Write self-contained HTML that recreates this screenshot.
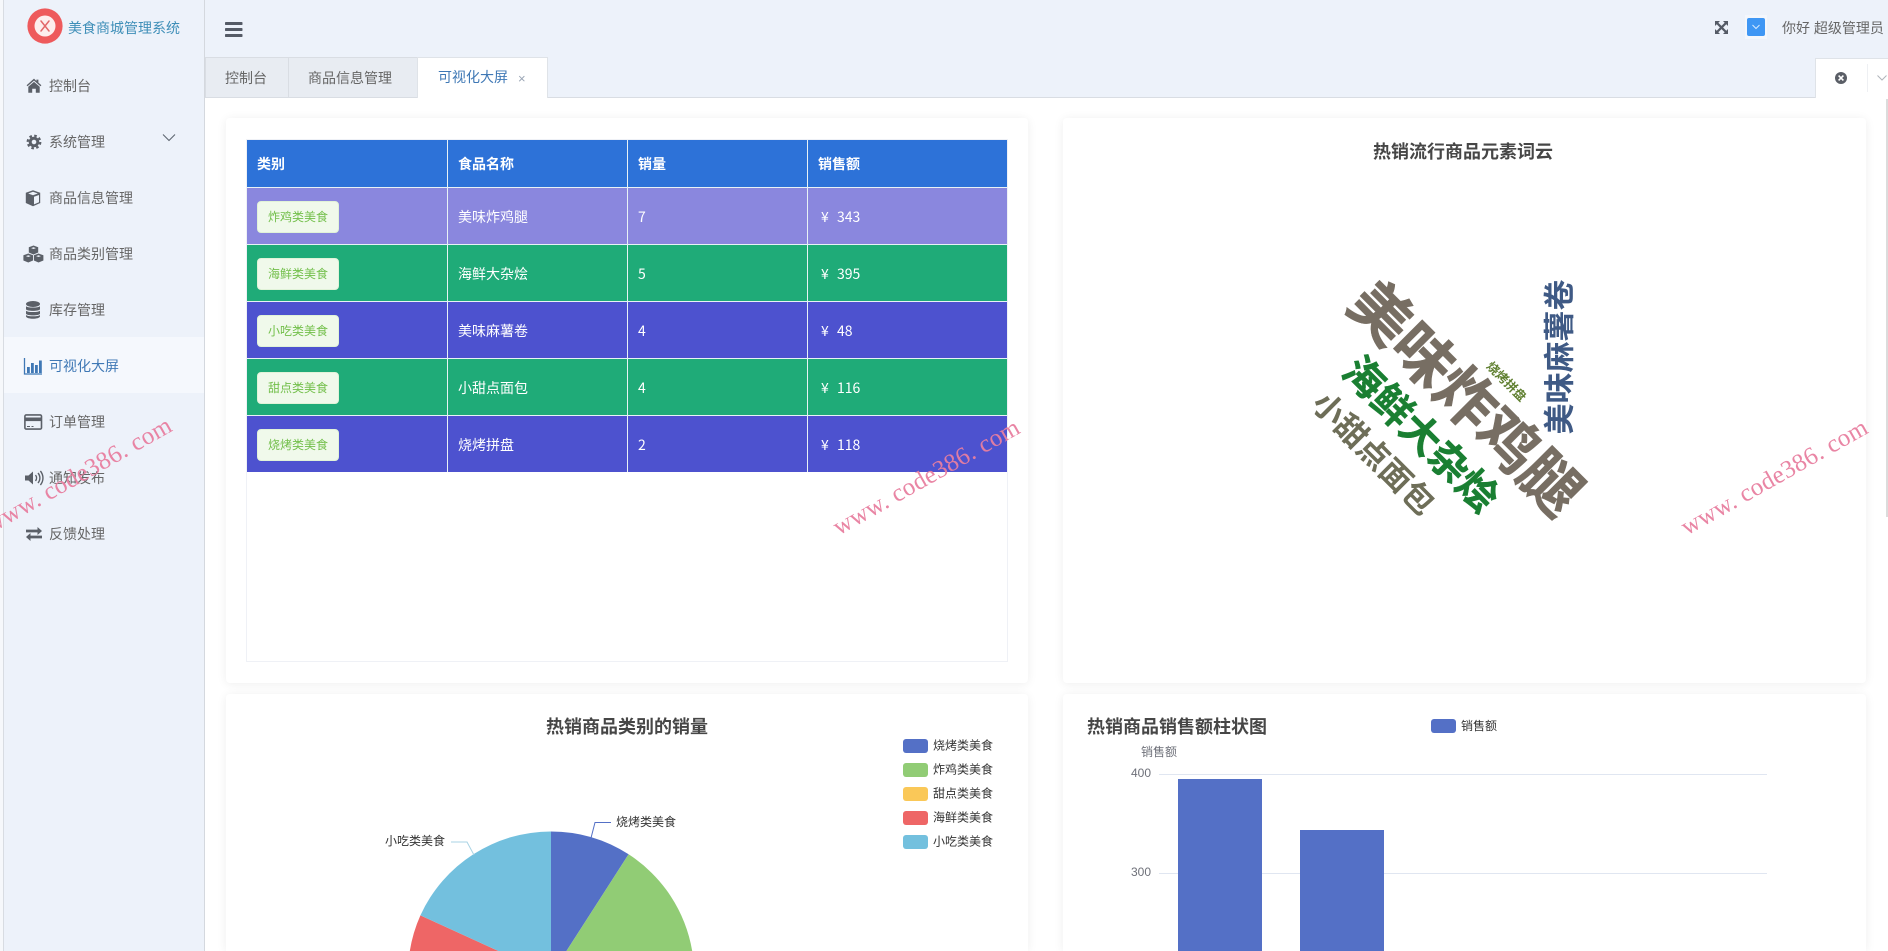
<!DOCTYPE html>
<html lang="zh-CN">
<head>
<meta charset="utf-8">
<title>美食商城管理系统</title>
<style>
*{box-sizing:border-box;margin:0;padding:0}
html,body{width:1888px;height:951px;overflow:hidden;background:#fff}
body{position:relative;font-family:"Liberation Sans","Noto Sans CJK SC",sans-serif;font-size:14px;color:#666}
.a{position:absolute;white-space:nowrap}
#top{left:0;top:0;width:1888px;height:97px;background:#edf2fa}
#side{left:3px;top:0;width:202px;height:951px;background:#edf2fa;border-left:1px solid #d8dce2;border-right:1px solid #d4d8de}
#edge{left:0;top:0;width:3px;height:951px;background:#f6f8fb}
.logo{left:68px;top:18px;line-height:20px;color:#3f8fb8}
.mi{left:49px;line-height:20px;color:#666}
.ic{position:absolute;left:22px;width:24px;height:24px}
.tab{top:57px;height:40px;line-height:41px;text-align:center;color:#666;background:#e8ecf2;border:1px solid #d9dde3;border-bottom:0}
.card{background:#fff;border-radius:4px;box-shadow:0 1px 10px rgba(0,0,0,.07)}
table{border-collapse:separate;border-spacing:0;table-layout:fixed;width:760px;color:#fff;font-family:"Noto Sans CJK SC",sans-serif}
th,td{text-align:left;padding:0 0 0 10px;border-right:1px solid #e8f2f6;border-bottom:1px solid #e8f2f6}
th:last-child,td:last-child{border-right:0}
tr:last-child td{border-bottom:0;height:56px}
th{height:48px;background:#2d72d8;font-weight:700}
td{height:57px;padding-top:1px;line-height:20px}
td:last-child{padding-left:13px}
td i{display:inline-block;width:16px;font-style:normal}
.r1 td{background:#8a87de}
.r2 td{background:#1fab78}
.r3 td{background:#4d52cf}
.tag{display:block;width:82px;height:32px;line-height:30px;text-align:center;font-size:12px;color:#72bf4a;background:#f0f9eb;border:1px solid #e1f3d8;border-radius:4px}
.wc{position:absolute;white-space:nowrap;font-weight:700;line-height:1;font-family:"Liberation Sans","Noto Sans CJK SC",sans-serif;transform:translate(-50%,-50%) rotate(45deg)}
.wm{position:absolute;white-space:nowrap;font-family:"Liberation Serif",serif;font-size:25px;line-height:28px;letter-spacing:.3px;color:#e87fa0;transform-origin:100% 50%;transform:rotate(-29.5deg);opacity:.95}
svg text{font-family:"Liberation Sans","Noto Sans CJK SC",sans-serif}
</style>
</head>
<body>
<div class="a" id="top"></div>
<div class="a" id="edge"></div>
<div class="a" id="side"></div>

<!-- logo -->
<svg class="a" style="left:27px;top:8px" width="36" height="36" viewBox="0 0 36 36">
<circle cx="18" cy="18" r="17.6" fill="#ee5a5c"/>
<circle cx="18" cy="18" r="10.5" fill="#fdeeee"/>
<path d="M14 13L22 23M22 13L14 23" stroke="#e2686a" stroke-width="1.5" stroke-linecap="round"/>
</svg>
<div class="a logo">美食商城管理系统</div>

<!-- hamburger -->
<svg class="a" style="left:225px;top:21px" width="18" height="16" viewBox="0 0 18 16">
<rect x="0" y="1" width="17.5" height="3" rx=".8" fill="#555b66"/>
<rect x="0" y="7" width="17.5" height="3" rx=".8" fill="#555b66"/>
<rect x="0" y="13" width="17.5" height="3" rx=".8" fill="#555b66"/>
</svg>

<!-- sidebar items -->
<div class="a" style="left:4px;top:337px;width:200px;height:56px;background:#f5f8fd"></div>
<div class="a mi" style="top:76px">控制台</div>
<div class="a mi" style="top:132px">系统管理</div>
<div class="a mi" style="top:188px">商品信息管理</div>
<div class="a mi" style="top:244px">商品类别管理</div>
<div class="a mi" style="top:300px">库存管理</div>
<div class="a mi" style="top:356px;color:#3f78b5">可视化大屏</div>
<div class="a mi" style="top:412px">订单管理</div>
<div class="a mi" style="top:468px">通知发布</div>
<div class="a mi" style="top:524px">反馈处理</div>

<svg class="a" style="left:161px;top:132px" width="16" height="12" viewBox="0 0 16 12"><path d="M2 2.5L8 8.5L14 2.5" fill="none" stroke="#5f6670" stroke-width="1.1"/></svg>

<!-- home -->
<svg class="ic" style="top:74px" viewBox="0 0 24 24" fill="#5b6068"><path d="M12 4.6L4.6 11.3l.9 1L12 6.6l6.5 5.7.9-1-3-2.7V5.6h-2v1.4z"/><path d="M6.3 12.7L12 7.9l5.7 4.8v6H13.8v-4h-3.6v4H6.3z"/></svg>
<!-- gear -->
<svg class="ic" style="top:130px" viewBox="0 0 24 24"><circle cx="12" cy="12" r="3.8" fill="none" stroke="#5b6068" stroke-width="3"/><circle cx="12" cy="12" r="6.3" fill="none" stroke="#5b6068" stroke-width="2.2" stroke-dasharray="2.6 2.35"/></svg>
<!-- cube -->
<svg class="ic" style="top:186px;left:21px" viewBox="0 0 24 24"><path d="M12 4.2L19.2 6.8V17L12 20.2 4.8 17V6.8z" fill="#5b6068"/><path d="M12 5.8L16.8 7.5 12 9.2 7.2 7.5z" fill="#edf2fa"/><path d="M13 10.8L18 9V16.2L13 18.4z" fill="#edf2fa"/></svg>
<!-- cubes -->
<svg class="ic" style="top:242px;left:21px" viewBox="0 0 24 24" fill="#5b6068"><path d="M12.5 3.5l4.7 1.8v5.2l-4.7 2-4.7-2V5.3z"/><path d="M7.3 11.5L12 13.3v5.2l-4.7 2-4.9-2v-5.2z"/><path d="M17.5 11.5l4.9 1.8v5.2l-4.9 2-4.6-2v-5.2z"/><path d="M12.5 5.2l2.4.9-2.4.9-2.4-.9z M7.3 13.2l2.4.9-2.4.9-2.4-.9z M17.5 13.2l2.4.9-2.4.9-2.4-.9z" fill="#edf2fa"/></svg>
<!-- database -->
<svg class="ic" style="top:298px;left:21px" viewBox="0 0 24 24" fill="#5b6068"><ellipse cx="12" cy="6" rx="7" ry="3"/><path d="M5 8.2c1.2 1.7 12.8 1.7 14 0v3c-1 2.2-13 2.2-14 0z"/><path d="M5 12.7c1.2 1.7 12.8 1.7 14 0v3c-1 2.2-13 2.2-14 0z"/><path d="M5 17c1.2 1.7 12.8 1.7 14 0v1.5c-1 3-13 3-14 0z"/></svg>
<!-- chart -->
<svg class="ic" style="top:354px;left:21px" viewBox="0 0 24 24"><path d="M3.5 4v16H21" fill="none" stroke="#3f78b5" stroke-width="1.3"/><g fill="#3f78b5"><rect x="6" y="13" width="2.8" height="6"/><rect x="10" y="9" width="2.8" height="10"/><rect x="14" y="11" width="2.8" height="8"/><rect x="18" y="6.5" width="2.8" height="12.5"/></g></svg>
<!-- card -->
<svg class="ic" style="top:410px;left:21px" viewBox="0 0 24 24"><rect x="3.9" y="4.9" width="16.6" height="14.2" rx="1.4" fill="none" stroke="#5b6068" stroke-width="1.6"/><rect x="4" y="7.5" width="16.4" height="3.6" fill="#5b6068"/><path d="M6 16.5h3M10.5 16.5h2" stroke="#5b6068" stroke-width="1"/></svg>
<!-- volume -->
<svg class="ic" style="top:466px;left:22px" viewBox="0 0 24 24"><path d="M3 9.5h3.5L11 5.5v13l-4.5-4H3z" fill="#5b6068"/><path d="M13.5 9c1.4 1.8 1.4 4.2 0 6M16 7c2.5 3 2.5 7 0 10M18.4 5c3.4 4.2 3.4 9.8 0 14" fill="none" stroke="#5b6068" stroke-width="1.4"/></svg>
<!-- exchange -->
<svg class="ic" style="top:522px;left:22px" viewBox="0 0 24 24" fill="#5b6068"><path d="M4 7.6h11.5V5L20 9l-4.5 4v-2.6H4z"/><path d="M20 13.6H8.5V11L4 15l4.5 4v-2.6H20z"/></svg>

<!-- header right -->
<svg class="a" style="left:1714px;top:20px" width="15" height="15" viewBox="0 0 15 15" fill="#555b66"><path d="M1 1h5L4.3 2.7 7.5 5.9 10.7 2.7 9 1h5v5l-1.7-1.700L9.100 7.500l3.200 3.200L14 9v5H9l1.700-1.700L7.500 9.100 4.300 12.300 6 14H1V9l1.700 1.700L5.900 7.500 2.700 4.300 1 6z"/></svg>
<div class="a" style="left:1745px;top:15px;width:22px;height:24px;background:#f4f7fc"></div>
<div class="a" style="left:1747px;top:18px;width:18px;height:18px;background:#3f97f4;border-radius:2px"></div>
<svg class="a" style="left:1751px;top:23px" width="10" height="8" viewBox="0 0 10 8"><path d="M1.5 2L5 5.5 8.5 2" fill="none" stroke="#d8ebff" stroke-width="1"/></svg>
<div class="a" style="left:1782px;top:18px;line-height:20px;color:#666">你好 超级管理员</div>

<!-- tabs -->
<div class="a" style="left:205px;top:97px;width:1683px;height:1px;background:#d9dde3"></div>
<div class="a" style="left:205px;top:98px;width:1683px;height:853px;background:#fff"></div>
<div class="a tab" style="left:205px;width:84px;padding-right:2px">控制台</div>
<div class="a tab" style="left:288px;width:130px;padding-right:6px">商品信息管理</div>
<div class="a tab" style="left:417px;width:131px;background:#fff;height:41px;border-color:#dfe3e8"></div>
<div class="a" style="left:438px;top:57px;line-height:41px;color:#3f78b5">可视化大屏</div>
<div class="a" style="left:518px;top:57px;line-height:43px;font-size:13px;color:#9aa5b5">×</div>
<div class="a" style="left:1815px;top:58px;width:73px;height:40px;background:#fff;border-left:1px solid #dfe3e8;border-top:1px solid #dfe3e8"></div>
<div class="a" style="left:1867px;top:64px;width:1px;height:28px;background:#eef0f3"></div>
<svg class="a" style="left:1834px;top:71px" width="14" height="14" viewBox="0 0 14 14"><circle cx="7" cy="7" r="6" fill="#5a5e66"/><path d="M4.600 4.600l4.800 4.800M9.400 4.600L4.600 9.400" stroke="#fff" stroke-width="1.6"/></svg>
<svg class="a" style="left:1876px;top:74px" width="12" height="8" viewBox="0 0 12 8"><path d="M1.500 1.500L6 6l4.500-4.500" fill="none" stroke="#b0b4ba" stroke-width="1"/></svg>

<!-- scrollbar -->
<div class="a" style="left:1886px;top:99px;width:2px;height:418px;background:#dcdcdc"></div>

<!-- card: table -->
<div class="a card" style="left:226px;top:118px;width:802px;height:565px"></div>
<div class="a" style="left:246px;top:139px;width:762px;height:523px;border:1px solid #eff1f6"></div>
<table class="a" style="left:247px;top:140px">
<colgroup><col style="width:201px"><col style="width:180px"><col style="width:180px"><col style="width:199px"></colgroup>
<tr><th>类别</th><th>食品名称</th><th>销量</th><th>销售额</th></tr>
<tr class="r1"><td><span class="tag">炸鸡类美食</span></td><td>美味炸鸡腿</td><td>7</td><td><i>¥</i>343</td></tr>
<tr class="r2"><td><span class="tag">海鲜类美食</span></td><td>海鲜大杂烩</td><td>5</td><td><i>¥</i>395</td></tr>
<tr class="r3"><td><span class="tag">小吃类美食</span></td><td>美味麻薯卷</td><td>4</td><td><i>¥</i>48</td></tr>
<tr class="r2"><td><span class="tag">甜点类美食</span></td><td>小甜点面包</td><td>4</td><td><i>¥</i>116</td></tr>
<tr class="r3"><td><span class="tag">烧烤类美食</span></td><td>烧烤拼盘</td><td>2</td><td><i>¥</i>118</td></tr>
</table>

<!-- card: word cloud -->
<div class="a card" style="left:1063px;top:118px;width:803px;height:565px"></div>
<div class="a" style="left:1373px;top:139px;line-height:26px;font-size:18px;font-weight:700;color:#464646">热销流行商品元素词云</div>
<div class="wc" style="left:1465px;top:399px;font-size:60px;color:#776e63;-webkit-text-stroke:.6px #776e63">美味炸鸡腿</div>
<div class="wc" style="left:1420px;top:435px;font-size:40px;color:#1a7f32;-webkit-text-stroke:.5px #1a7f32">海鲜大杂烩</div>
<div class="wc" style="left:1373px;top:454px;font-size:31.5px;color:#6e6e58">小甜点面包</div>
<div class="wc" style="left:1560px;top:357px;font-size:31px;color:#3f5a85;transform:translate(-50%,-50%) rotate(-90deg)">美味麻薯卷</div>
<div class="wc" style="left:1506px;top:382px;font-size:12.5px;color:#5f7f2f">烧烤拼盘</div>

<!-- card: pie -->
<div class="a card" style="left:226px;top:694px;width:802px;height:257px;border-radius:4px 4px 0 0"></div>
<!-- card: bar -->
<div class="a card" style="left:1063px;top:694px;width:803px;height:257px;border-radius:4px 4px 0 0"></div>

<svg class="a" style="left:0;top:0" width="1888" height="951" viewBox="0 0 1888 951">
<!-- pie -->
<text x="627" y="733" text-anchor="middle" font-size="18" font-weight="700" fill="#464646">热销商品类别的销量</text>
<g>
<path d="M551 951V831.500A143.500 143.500 0 0 1 628.600 854.300L551 975Z" fill="#5470c6"/>
<path d="M551 975L628.600 854.300A143.500 143.500 0 0 1 692.200 951H566.400Z" fill="#91cc75"/>
<path d="M551 975L535.600 951H409.800A143.500 143.500 0 0 1 420.400 915.400Z" fill="#ee6666"/>
<path d="M551 975L420.400 915.400A143.500 143.500 0 0 1 551 831.500Z" fill="#73c0de"/>
</g>
<path d="M591 838L595 822.500H611" fill="none" stroke="#5470c6" stroke-width="1"/>
<path d="M474 855L467 842H451" fill="none" stroke="#a9d3e4" stroke-width="1"/>
<g font-size="12" fill="#333">
<text x="616" y="826">烧烤类美食</text>
<text x="385" y="845">小吃类美食</text>
</g>
<g>
<rect x="903" y="739" width="25" height="14" rx="3" fill="#5470c6"/>
<rect x="903" y="763" width="25" height="14" rx="3" fill="#91cc75"/>
<rect x="903" y="787" width="25" height="14" rx="3" fill="#fac858"/>
<rect x="903" y="811" width="25" height="14" rx="3" fill="#ee6666"/>
<rect x="903" y="835" width="25" height="14" rx="3" fill="#73c0de"/>
</g>
<g font-size="12" fill="#333">
<text x="933" y="749.500">烧烤类美食</text>
<text x="933" y="773.500">炸鸡类美食</text>
<text x="933" y="797.500">甜点类美食</text>
<text x="933" y="821.500">海鲜类美食</text>
<text x="933" y="845.500">小吃类美食</text>
</g>
<!-- bar -->
<text x="1087" y="733" font-size="18" font-weight="700" fill="#464646">热销商品销售额柱状图</text>
<rect x="1431" y="719" width="25" height="14" rx="3" fill="#5470c6"/>
<text x="1461" y="730" font-size="12" fill="#333">销售额</text>
<text x="1141" y="756" font-size="12" fill="#6e7079">销售额</text>
<text x="1151" y="777" font-size="12" text-anchor="end" fill="#6e7079">400</text>
<text x="1151" y="876" font-size="12" text-anchor="end" fill="#6e7079">300</text>
<path d="M1159 774.500H1767M1159 873.500H1767" stroke="#e0e6f1" stroke-width="1"/>
<rect x="1178" y="779" width="84" height="172" fill="#5470c6"/>
<rect x="1300" y="830" width="84" height="121" fill="#5470c6"/>
</svg>

<!-- watermarks -->
<div class="wm" style="right:1718px;top:410px">www. code386. com</div>
<div class="wm" style="right:870px;top:412px">www. code386. com</div>
<div class="wm" style="right:22px;top:412px">www. code386. com</div>
</body>
</html>
